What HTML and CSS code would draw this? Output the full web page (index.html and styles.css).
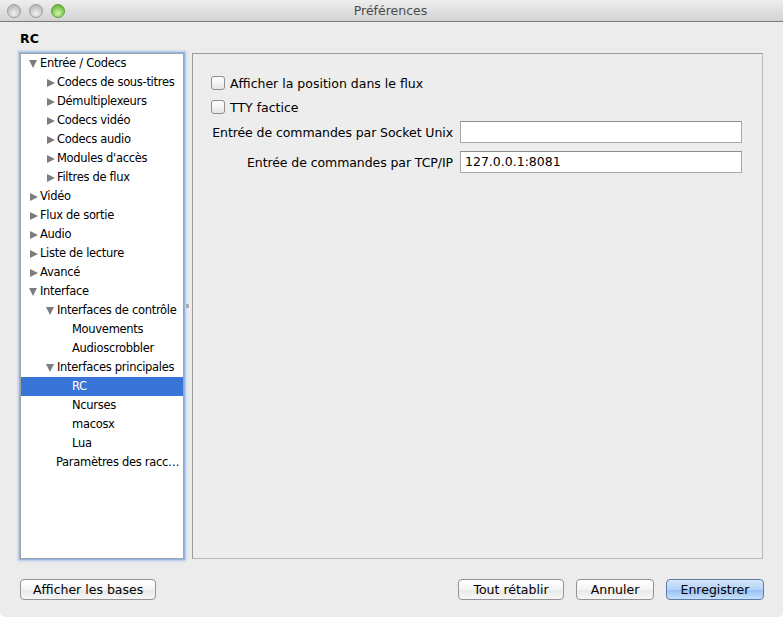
FILE: index.html
```html
<!DOCTYPE html>
<html lang="fr">

<head>
    <meta charset="UTF-8">
    <title>Préférences</title>
    <link rel="stylesheet" href="styles.css">
</head>

<body>
    <div class="window">
        <div class="titlebar">
            <div class="lights">
                <span class="light"></span>
                <span class="light"></span>
                <span class="light green"></span>
            </div>
            <div class="title">Préférences</div>
        </div>

        <div class="content">
            <div class="heading">RC</div>

            <div class="main">
                <ul class="tree">
                    <li class="row lvl0"><span class="arrow down"></span>Entrée / Codecs</li>
                    <li class="row lvl1"><span class="arrow right"></span>Codecs de sous-titres</li>
                    <li class="row lvl1"><span class="arrow right"></span>Démultiplexeurs</li>
                    <li class="row lvl1"><span class="arrow right"></span>Codecs vidéo</li>
                    <li class="row lvl1"><span class="arrow right"></span>Codecs audio</li>
                    <li class="row lvl1"><span class="arrow right"></span>Modules d'accès</li>
                    <li class="row lvl1"><span class="arrow right"></span>Filtres de flux</li>
                    <li class="row lvl0"><span class="arrow right"></span>Vidéo</li>
                    <li class="row lvl0"><span class="arrow right"></span>Flux de sortie</li>
                    <li class="row lvl0"><span class="arrow right"></span>Audio</li>
                    <li class="row lvl0"><span class="arrow right"></span>Liste de lecture</li>
                    <li class="row lvl0"><span class="arrow right"></span>Avancé</li>
                    <li class="row lvl0"><span class="arrow down"></span>Interface</li>
                    <li class="row lvl1"><span class="arrow down"></span>Interfaces de contrôle</li>
                    <li class="row lvl2">Mouvements</li>
                    <li class="row lvl2">Audioscrobbler</li>
                    <li class="row lvl1"><span class="arrow down"></span>Interfaces principales</li>
                    <li class="row lvl2 selected">RC</li>
                    <li class="row lvl2">Ncurses</li>
                    <li class="row lvl2">macosx</li>
                    <li class="row lvl2">Lua</li>
                    <li class="row lvl1 leaf">Paramètres des racc…</li>
                </ul>

                <div class="splitter"><span class="grip"></span></div>

                <div class="panel">
                    <label class="check"><span class="box"></span>Afficher la position dans le flux</label>
                    <label class="check"><span class="box"></span>TTY factice</label>

                    <div class="field">
                        <span class="field-label">Entrée de commandes par Socket Unix</span>
                        <span class="input"></span>
                    </div>
                    <div class="field">
                        <span class="field-label">Entrée de commandes par TCP/IP</span>
                        <span class="input">127.0.0.1:8081</span>
                    </div>
                </div>
            </div>

            <div class="footer">
                <button class="btn">Afficher les bases</button>
                <div class="spacer"></div>
                <button class="btn reset">Tout rétablir</button>
                <button class="btn cancel">Annuler</button>
                <button class="btn primary">Enregistrer</button>
            </div>
        </div>
    </div>
</body>

</html>
```

FILE: styles.css
```css
html,
body {
    margin: 0;
    background-color: #ffffff;
}

body {
    font-family: "DejaVu Sans", "Lucida Grande", sans-serif;
    font-size: 12px;
    color: #000;
}

.window {
    width: 783px;
    height: 617px;
    background-color: #ececec;
    border-radius: 0 0 5px 5px;
    overflow: hidden;
    display: flex;
    flex-direction: column;
}

.titlebar {
    height: 21px;
    border-bottom: 1px solid #7b7b7b;
    background: linear-gradient(#eeeeee, #d2d2d2);
    display: flex;
    align-items: center;
}

.lights {
    display: flex;
    gap: 8px;
    padding-left: 7px;
}

.light {
    width: 12px;
    height: 12px;
    border-radius: 50%;
    border: 0.5px solid #9a9a9a;
    background: radial-gradient(circle at 50% 70%, #f2f2f2, #c4c4c4 60%, #b0b0b0);
}

.light.green {
    border-color: #5d9c3c;
    background: radial-gradient(circle at 50% 70%, #d2f4a4, #86cc5a 55%, #5aa236);
}

.title {
    flex: 1;
    text-align: center;
    margin-left: -67px;
    color: #4c4c4c;
    font-size: 12.5px;
}

.content {
    flex: 1;
    display: flex;
    flex-direction: column;
    padding: 0 20px;
}

.heading {
    font-weight: bold;
    font-size: 12.5px;
    margin-top: 9px;
    height: 22px;
}

.main {
    display: flex;
    height: 506px;
}

.tree {
    list-style: none;
    margin: 0;
    padding: 0;
    width: 162px;
    background-color: #fff;
    border: 1px solid #a4a4a4;
    box-shadow: 0 0 0 1px #8fb6e6, 0 0 2px 2px rgba(120, 170, 230, 0.55);
    overflow: hidden;
    font-size: 11.5px;
    letter-spacing: -0.3px;
}

.row {
    height: 19px;
    line-height: 19px;
    white-space: nowrap;
    display: flex;
    align-items: center;
}

.lvl0 {
    padding-left: 8px;
}

.lvl1 {
    padding-left: 25px;
}

.lvl1.leaf {
    padding-left: 35px;
}

.lvl2 {
    padding-left: 51px;
}

.selected {
    background-color: #3875d7;
    color: #fff;
}

.arrow {
    width: 11px;
    height: 9px;
    display: inline-flex;
    align-items: center;
    justify-content: flex-start;
}

.arrow.right::before {
    content: "";
    margin-left: 1px;
    border-left: 8px solid #7d7d7d;
    border-top: 4.5px solid transparent;
    border-bottom: 4.5px solid transparent;
}

.arrow.down::before {
    content: "";
    border-top: 8px solid #7d7d7d;
    border-left: 4.5px solid transparent;
    border-right: 4.5px solid transparent;
}

.splitter {
    width: 8px;
    display: flex;
    align-items: center;
    justify-content: center;
}

.grip {
    width: 3px;
    height: 4px;
    background-color: #a8a8a8;
    border-radius: 1px;
    margin-left: -2px;
}

.panel {
    flex: 1;
    background-color: #ededed;
    border: 1px solid #b8b8b8;
    border-top-color: #9c9c9c;
    border-left-color: #9c9c9c;
    padding: 17px 0 0 18px;
    font-size: 12.5px;
}

.check {
    display: flex;
    align-items: center;
    height: 24px;
}

.box {
    width: 12px;
    height: 12px;
    border: 1px solid #8e8e8e;
    border-radius: 3px;
    background: linear-gradient(#ffffff, #e6e6e6);
    margin-right: 5px;
}

.field {
    display: flex;
    align-items: center;
    margin-top: 1px;
    height: 24px;
}

.field + .field {
    margin-top: 6px;
}

.field-label {
    width: 242px;
    white-space: nowrap;
    text-align: right;
    margin-right: 7px;
    letter-spacing: -0.08px;
}

.input {
    width: 276px;
    height: 20px;
    line-height: 20px;
    padding-left: 4px;
    background-color: #fff;
    border: 1px solid #a8a8a8;
    border-top-color: #8e8e8e;
    font-size: 12.5px;
}

.footer {
    display: flex;
    align-items: center;
    margin-top: 20px;
    margin-right: -1px;
}

.spacer {
    flex: 1;
}

.btn {
    height: 21px;
    padding: 0 12px;
    font-family: "DejaVu Sans", "Lucida Grande", sans-serif;
    font-size: 12.5px;
    color: #000;
    border: 1px solid #939393;
    border-radius: 4px;
    background: linear-gradient(#ffffff, #f4f4f4 50%, #e8e8e8 51%, #f6f6f6);
}

.reset {
    width: 106px;
}

.cancel {
    width: 78px;
    margin-left: 12px;
}

.primary {
    width: 98px;
    margin-left: 12px;
    border-color: #5b7ba8;
    background: linear-gradient(#d6e7fb, #b4d2f6 50%, #94bdf1 51%, #c9e1fb);
}
```
